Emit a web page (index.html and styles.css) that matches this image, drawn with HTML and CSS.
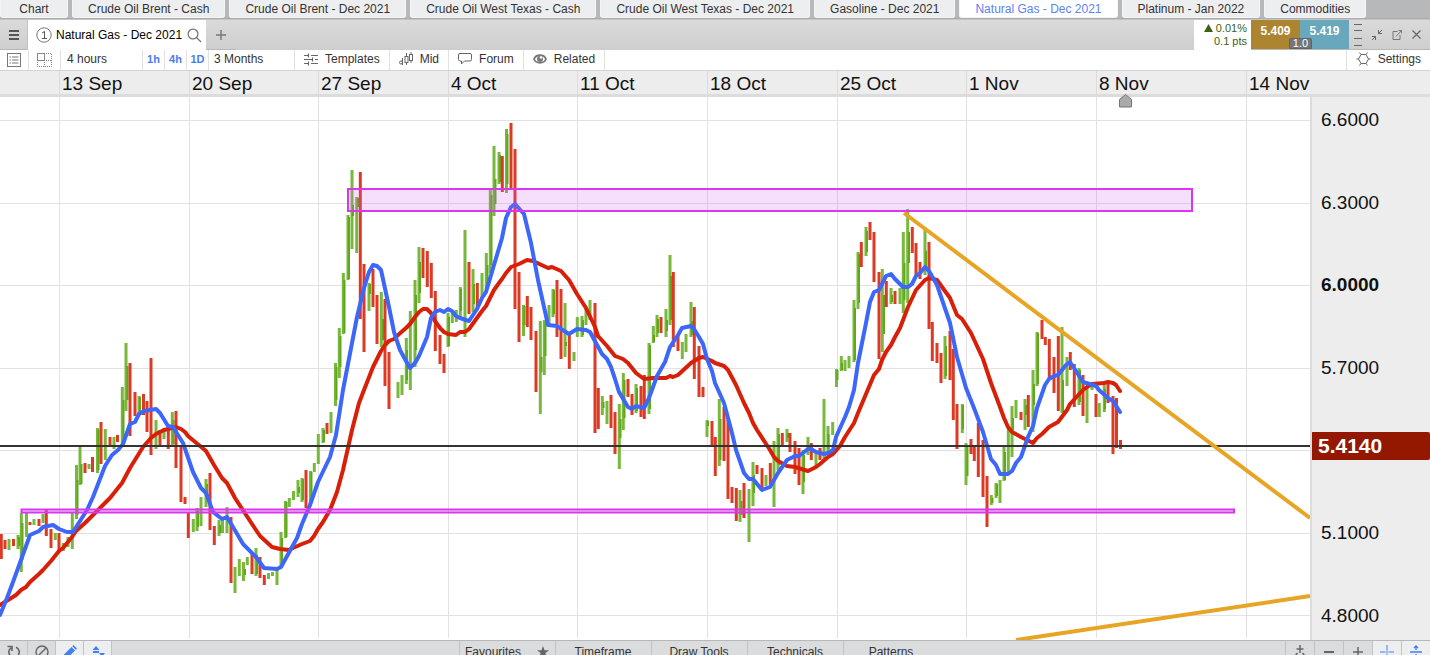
FILE: index.html
```html
<!DOCTYPE html>
<html lang="en">
<head>
<meta charset="utf-8">
<title>Natural Gas - Dec 2021</title>
<link rel="stylesheet" href="styles.css">
</head>
<body>
<nav class="markets" aria-label="Markets">
  <a href="#chart">Chart</a>
  <a href="#brent-cash">Crude Oil Brent - Cash</a>
  <a href="#brent-dec">Crude Oil Brent - Dec 2021</a>
  <a href="#wti-cash">Crude Oil West Texas - Cash</a>
  <a href="#wti-dec">Crude Oil West Texas - Dec 2021</a>
  <a href="#gasoline">Gasoline - Dec 2021</a>
  <a href="#natgas" class="current" aria-current="page">Natural Gas - Dec 2021</a>
  <a href="#platinum">Platinum - Jan 2022</a>
  <a href="#commodities">Commodities</a>
</nav>

<header class="titlebar">
  <button class="menu" aria-label="Menu"><svg width="10" height="10" stroke="#555" stroke-width="2"><path d="M0 1H10M0 5H10M0 9H10"/></svg></button>
  <div class="product">
    <svg width="16" height="16" fill="none" stroke="#777"><circle cx="8" cy="8" r="7.2"/><path d="M6 6L8.5 4.5V11.5M6 11.5H11" stroke="#555"/></svg>
    <span class="product-name">Natural Gas - Dec 2021</span>
    <button aria-label="Search"><svg width="15" height="15" fill="none" stroke="#777" stroke-width="1.3"><circle cx="6" cy="6" r="4.9"/><path d="M9.5 9.5L14 14"/></svg></button>
  </div>
  <button class="add" aria-label="Add chart"><svg width="10" height="10" stroke="#777" stroke-width="1.4"><path d="M5 0V10M0 5H10"/></svg></button>
  <div class="change"><span><svg width="9" height="8" fill="#3d6114"><path d="M4.500 0L9 8H0Z"/></svg> 0.01%</span><span>0.1 pts</span></div>
  <div class="deal">
    <button class="sell">5.409</button><button class="buy">5.419</button>
    <span class="spread">1.0</span>
  </div>
  <div class="window-tools">
    <button aria-label="Drag"><svg width="8" height="24" stroke="#666"><path d="M0 1.500H8M0 7.500H8M0 15.500H8M0 22.500H8"/></svg></button>
    <button aria-label="Shrink"><svg width="10" height="10" fill="none" stroke="#666"><path d="M10 0L6.500 3.500M6.500 0V3.500H10M0 10L3.500 6.500M0 6.500H3.500V10"/></svg></button>
    <button aria-label="Pop out"><svg width="10" height="10" fill="none" stroke="#777"><path d="M5.500 1.500H1V9.500H8V5M4 6.500L9 1M6.500 .5H9.500V3.500"/></svg></button>
    <button aria-label="Close"><svg width="9" height="9" stroke="#666" stroke-width="1.2"><path d="M.5 .5L8.500 8.500M8.500 .5L.5 8.500"/></svg></button>
  </div>
</header>

<div class="toolbar">
  <button class="tool list" aria-label="List"><svg width="14" height="14" fill="none" stroke="#777"><rect x=".5" y=".5" width="13" height="13"/><path d="M2.500 4H4M5 4H11.500M2.500 7H4M5 7H11.500M2.500 10H4M5 10H11.500"/></svg></button>
  <button class="tool layout" aria-label="Layout"><svg width="15" height="14" fill="none" stroke="#888"><rect x=".5" y=".5" width="7" height="7"/><path stroke-dasharray="1 1" d="M9 .5H14.500V13.500H.5V9M7.500 9V13.500M9 7.500H14.500"/></svg></button>
  <select class="interval" aria-label="Interval"><option>4 hours</option><option>1 day</option></select>
  <button class="quick">1h</button>
  <button class="quick">4h</button>
  <button class="quick">1D</button>
  <select class="range" aria-label="Range"><option>3 Months</option><option>1 Year</option></select>
  <button class="tool"><svg width="14" height="13" fill="none" stroke="#666" stroke-width="1.2"><path d="M0 2.500H4M7 2.500H14M0 6.500H8M11 6.500H14M0 10.500H4M7 10.500H14M4.500 .5V4.500M8.500 4.500V8.500M4.500 8.500V12.500"/></svg>Templates</button>
  <button class="tool mid"><svg width="14" height="14" fill="none" stroke="#666"><circle cx="2" cy="10.500" r="1.500"/><path d="M3.500 6V13M7.500 1V4M7.500 11V13M12 0V2M12 9V11"/><rect x="6" y="4.500" width="3" height="6"/><rect x="10.500" y="2.500" width="3" height="6"/></svg>Mid</button>
  <button class="tool"><svg width="14" height="12" fill="none" stroke="#666"><path d="M2 .5H12Q13.500 .5 13.500 2V6.500Q13.500 8 12 8H6.500L3.500 11V8H2Q.5 8 .5 6.500V2Q.5 .5 2 .5Z"/></svg>Forum</button>
  <button class="tool related"><svg width="14" height="10" fill="none" stroke="#777" stroke-width="1.800"><path d="M1 5C3 0 11 0 13 5C11 10 3 10 1 5Z"/><circle cx="7" cy="5" r="3" fill="#777" stroke="none"/><circle cx="8" cy="3.500" r="1.300" fill="#fff" stroke="none"/></svg>Related</button>
  <button class="tool settings"><svg width="15" height="14" fill="none" stroke="#666"><path d="M5 2.500H10L12.500 7L10 11.500H5L2.500 7Z"/><path d="M5 2.500L3.500 .5M10 2.500L11.500 .5M12.500 7H14.500M10 11.500L11.500 13.500M5 11.500L3.500 13.500M2.500 7H.5"/></svg>Settings</button>
</div>

<div class="dates">
  <span></span><span>13 Sep</span><span>20 Sep</span><span>27 Sep</span><span>4 Oct</span><span>11 Oct</span><span>18 Oct</span><span>25 Oct</span><span>1 Nov</span><span>8 Nov</span><span>14 Nov</span>
</div>

<main class="chart">
  <svg class="plot" viewBox="0 97 1310 543" preserveAspectRatio="none" role="img" aria-label="Natural Gas price chart">
    <path class="grid" d="M59.500 97V638M189.500 97V638M318.500 97V638M448.500 97V638M577.500 97V638M707.500 97V638M837.500 97V638M966.500 97V638M1096.500 97V638M1246.500 97V638M0 120.500H1310M0 203.500H1310M0 285.500H1310M0 368.500H1310M0 450.500H1310M0 533.500H1310M0 615.500H1310"/>
    <path class="up" d="M9 539V550M18 535V549M21.300 513V572M26.500 513V537M34 519V525M43 514V523M55.300 533V540M63.300 543V551M68 537V547M72.300 513V549M76.500 465V519M80 445V485M89 464V469M97.500 428V473M105.300 429V460M114 437V449M122.300 387V443M126 343V411M139 396V413M156 420V449M164 428V439M172.300 412V445M193.300 519V532M197 508V531M201 497V526M206 479V507M219 520V536M222.500 520V533M227 507V533M235 567V593M239.300 559V576M243.500 562V581M247.300 557V565M256 548V576M268.500 573V579M272.500 572V576M277 570V585M281 532V568M285.500 501V538M289.300 498V507M293.500 491V500M298 480V497M302 478V502M310.500 471V503M314.300 463V472M318.300 434V464M323 428V443M331 412V433M335.500 363V406M339.300 328V378M343.300 273V334M348 215V280M352 170V249M356.700 197V253M369 283V311M381.300 292V347M398 382V398M402 375V395M406.300 338V384M410.300 311V390M415 280V367M419 247V303M448 313V347M452.300 310V323M456.300 310V322M460.300 287V317M465 230V337M473 269V312M482 273V297M486.300 253V292M490.300 189V273M494 146V216M499 152V184M506.500 129V193M523.500 305V336M540.300 321V414M544.300 320V375M549 305V325M553 289V317M565 303V357M574 352V361M577.300 317V337M582 316V337M586 309V325M590 300V320M602.300 396V415M607 401V424M619.300 404V469M623.300 373V430M636 384V413M649 343V414M653.300 326V343M657 315V337M666 309V337M670 255V325M682.300 342V359M686 334V352M691 302V337M707 420V437M719.300 399V466M740 490V522M749 489V542M753 462V506M766 475V486M774 441V507M778 428V470M787 429V442M803 450V494M808 437V455M816 452V466M824 399V460M828 426V453M832.700 422V435M836.500 369V387M841.300 356V371M845 360V371M849 356V368M854 300V362M858 252V309M866 227V256M882.300 269V352M891 288V304M900 288V304M903.300 232V313M907.700 209V303M925 230V275M945 336V379M962.300 404V433M966 443V485M991.300 495V505M996 483V498M1000 480V503M1004 447V481M1008.300 427V475M1012 406V457M1016 400V418M1025 399V430M1033 370V432M1037 332V386M1062 327V413M1067 357V386M1079 368V405M1087 387V423M1092 386V390M1099.300 403V417M1104.300 385V412"/>
    <path class="body" d="M19 537V546M22.500 523V560M77.500 480V515M81.500 464V484M98.500 430V470M123.500 400V440M127.500 366V400M140 397V411M173.500 420V444M198 511V527M207 484V500M220 525V533M245 569V575M257 555V574M282 538V564M286.500 502V537M299 487V493M303 479V500M311.500 472V500M324 430V442M336.500 367V400M340.500 336V367M344.500 280V333M349 217V279M353 205V216M358 198V207M370 284V294M383 319V340M407 350V380M416 295V350M420 262V293M449 317V346M461 289V311M474 284V304M487.500 265V286M491.500 195V265M495.500 179V204M500 155V182M507.500 134V184M524.500 306V325M541.500 357V372M545.500 322V356M554 290V314M566 342V346M583 320V335M603.500 402V408M620.500 419V438M624.500 380V418M637 388V411M650 345V409M654 335V342M658 319V333M667 320V331M671 276V320M692 321V335M708 421V426M720.500 419V460M741.500 501V515M754 475V493M779 434V465M788 433V438M804 455V482M828.500 434V449M837.500 370V380M842 363V370M855 308V360M859 254V303M867 231V252M884 295V334M892 295V302M904.500 263V300M909 232V263M926 251V270M946 346V376M963 405V429M967.500 447V476M992.500 498V503M997 484V496M1005 452V480M1013 418V430M1026 405V415M1034 384V405M1038 333V384M1063 380V412M1080 370V402M1105 389V409"/>
    <path class="down" d="M1.300 534V559M5 540V549M13.500 539V546M30 522V525M39 519V526M46.300 510V536M51 529V548M59 533V550M85 463V473M92.500 457V472M101 422V464M110 437V446M117.500 435V442M130 363V436M135 392V416M143.500 394V415M147 401V432M151 358V455M160 430V445M168.300 428V449M176 411V468M181 447V502M185 497V504M188.300 513V538M210 473V530M214.300 526V545M231 517V583M252 553V574M260 557V578M264.300 575V585M306 470V508M327 423V434M360.300 172V319M364 264V352M373 269V307M377 295V344M385 299V386M389 352V409M423 248V278M427.300 251V287M431.300 263V298M435.300 291V351M440 335V364M444 354V373M469 262V314M477.300 283V310M502.300 156V192M511 123V189M515 149V309M519 272V342M527.300 296V327M531 307V340M536 331V392M557 280V337M561 289V359M569.300 335V369M595 303V433M598.300 388V429M611 395V428M615 412V454M628 379V397M632 394V415M641 386V417M644.300 375V419M661 317V333M673.300 272V347M678 335V351M694.300 307V379M699 346V397M703 387V397M712 421V445M715.300 437V476M724 407V461M728 420V499M732 487V503M736.300 488V521M744 483V518M757 465V474M762 468V488M770.300 463V486M782.300 433V445M790 433V452M795 441V474M799 448V485M811.300 443V460M820 448V460M861.300 242V267M870 222V240M874 232V282M879 272V359M886.300 281V307M895 291V304M912.300 227V253M916 243V275M920 262V279M929 242V329M932.300 322V361M937 343V363M941 353V383M950 331V380M953.300 349V420M957 404V449M971 439V454M974.300 446V461M978.300 423V477M983 440V497M987 476V527M1021 412V420M1028.300 395V427M1042 320V339M1045.300 337V345M1049.300 339V380M1054 357V393M1058.300 336V411M1070.300 352V370M1074.300 364V407M1083 375V416M1096 394V417M1108 382V403M1113 396V454M1116.500 398V448M1120.500 440V449"/>
    <path class="slow" d="M0 605L16 595 21 590 26 587 30 582 39 574 43 570 51 561 59 551 63 548 72 537 76 531 85 523 101 507 110 498 122 483 130 468 143 447 151 438 156 434 164 430 176 427 181 429 185 432 188 436 206 451 214 465 222 478 227 483 235 498 252 524 260 536 272 547 280 549 289 550 293 548 302 544 310 541 314 536 318 529 323 522 330 510 337 492 343 470 352 430 359 403 364 390 373 367 381 351 385 345 389 341 394 339 398 335 406 328 410 324 415 317 419 312 423 309 427 309 431 313 435 321 440 328 444 332 448 334 456 335 460 332 465 332 469 329 482 311 486 306 494 290 499 283 502 279 506 273 511 267 519 264 527 260 533 261 548 268 552 267 561 271 569 280 577 294 586 308 595 327 598 336 607 346 615 356 623 359 628 363 636 373 644 379 653 378 666 378 670 376 673 377 678 375 691 363 699 358 703 357 712 361 715 363 724 366 728 370 736 385 744 403 749 413 753 423 757 430 770 450 774 457 778 461 787 466 795 467 808 471 816 467 820 464 828 457 833 454 840 446 845 437 854 423 858 413 874 375 879 369 882 360 886 352 891 345 895 337 900 328 908 307 916 290 925 280 929 278 937 280 950 298 957 315 962 319 971 333 983 359 991 383 1000 407 1004 418 1008 427 1012 432 1021 437 1033 443 1037 438 1042 434 1049 427 1058 422 1067 410 1070 404 1083 390 1087 387 1092 384 1104 383 1108 382 1113 383 1116 385 1120 391"/>
    <path class="fast" d="M0 615L7 598 13 582 21 560 30 535 39 531 43 527 53 525 59 529 67 532 73 532 80 521 87 510 93 497 105 466 112 455 118 450 123 444 130 424 135 422 139 414 144 411 156 409 160 413 168 426 173 427 183 443 193 472 201 488 206 493 213 512 222 519 227 517 233 527 243 544 256 557 264 568 277 569 281 567 297 538 302 524 310 505 318 482 330 457 336 435 343 390 352 343 357 317 364 288 369 272 373 265 377 266 381 270 389 307 394 332 400 350 406 361 410 368 415 363 419 356 427 337 431 318 435 312 440 310 444 312 448 309 452 311 456 316 460 318 469 321 477 309 482 298 486 292 494 265 502 238 506 218 511 207 515 204 524 214 531 243 538 280 548 325 557 326 561 329 569 334 577 329 586 330 590 332 602 354 607 359 611 367 615 379 619 392 628 407 632 409 636 406 644 408 649 398 657 376 665 362 670 347 678 335 682 328 691 326 694 329 699 337 703 344 707 359 712 371 715 383 724 403 732 433 736 450 744 473 749 479 753 479 762 490 770 487 778 473 787 460 795 456 799 456 808 449 811 449 816 452 824 454 828 453 833 450 836 437 845 417 849 407 854 390 858 363 866 323 870 302 874 292 879 290 886 276 891 274 895 279 903 287 908 287 912 284 916 276 920 273 925 267 929 271 937 285 950 323 957 357 966 388 974 408 983 432 991 459 996 465 1000 474 1008 474 1012 471 1016 463 1021 457 1028 437 1033 426 1037 408 1045 385 1049 379 1054 376 1058 375 1066 365 1070 362 1074 368 1083 382 1096 386 1099 390 1108 398 1113 401 1120 412"/>
    <rect class="zone" x="348" y="189" width="844" height="22"/>
    <rect class="zone" x="21.500" y="509.500" width="1212.500" height="3"/>
    <path class="price" d="M0 446H1310"/>
    <path class="trend" d="M904 213L1310 518M1016 640L1310 596"/>
    <path class="pin" d="M1119.500 107V99.500L1125.500 94.500L1131.500 99.500V107Z"/>
  </svg>
  <aside class="axis">
    <div class="prices"><span>6.6000</span><span>6.3000</span><b>6.0000</b><span>5.7000</span><span></span><span>5.1000</span><span>4.8000</span></div>
    <strong class="last">5.4140</strong>
  </aside>
</main>

<footer class="bottom">
  <div class="group">
    <button aria-label="Reset"><svg width="14" height="14" fill="none" stroke="#666" stroke-width="1.600"><path d="M9 2.200A5.200 5.200 0 1 1 4 2.800M.5 1.500H5V6"/></svg></button>
    <button aria-label="Clear"><svg width="14" height="14" fill="none" stroke="#666" stroke-width="1.400"><circle cx="7" cy="7" r="6"/><path d="M3 11L11 3"/></svg></button>
    <button class="on" aria-label="Draw"><svg width="14" height="14" fill="#4080f5"><path d="M0 14L1 9.500L8.500 2L12 5.500L4.500 13ZM9.300 1.200L10.500 0L14 3.500L12.800 4.700Z"/></svg></button>
    <button class="on" aria-label="Shapes"><svg width="14" height="14" fill="#4080f5"><path d="M5 1L8.500 5H1.500ZM2 6H8V8H2ZM8 8H14L11 12Z"/></svg></button>
  </div>
  <div class="group menus">
    <button class="fav">Favourites<svg width="12" height="12" fill="#666"><path d="M6 0L7.500 4.300H12L8.400 7L9.700 11.500L6 8.800L2.300 11.500L3.600 7L0 4.300H4.500Z"/></svg></button>
    <button>Timeframe</button><button>Draw Tools</button><button>Technicals</button><button>Patterns</button>
  </div>
  <div class="group">
    <button aria-label="Fit"><svg width="14" height="14" fill="none" stroke="#666" stroke-width="1.500"><path d="M7 0V8M3.500 4H10.500M4.500 8L2 11M9.500 8L12 11M1 12H13"/></svg></button>
    <button aria-label="Zoom out"><svg width="10" height="10" stroke="#666" stroke-width="2"><path d="M0 5H10"/></svg></button>
    <button aria-label="Zoom in"><svg width="10" height="10" stroke="#666" stroke-width="1.500"><path d="M0 5H10M5 0V10"/></svg></button>
    <button class="on" aria-label="Crosshair"><svg width="14" height="14" stroke="#4080f5"><path d="M0 7H5.500M8.500 7H14M7 0V5.500M7 8.500V14M6 7H8"/></svg></button>
    <button class="on" aria-label="Level"><svg width="12" height="14" fill="none" stroke="#4080f5" stroke-width="1.400"><path d="M0 7H12M6 1V5M6 9V13M4 3L6 1L8 3M4 11L6 13L8 11"/></svg></button>
  </div>
</footer>
</body>
</html>
```
FILE: styles.css
```css
* { box-sizing: border-box; }

body {
  margin: 0;
  height: 100vh;
  overflow: hidden;
  display: flex;
  flex-direction: column;
  background: #fff;
  color: #333;
  font: 12px/16px "Liberation Sans", Arial, sans-serif;
}

button, select {
  margin: 0;
  padding: 0;
  border: 0;
  border-radius: 0;
  background: none;
  color: inherit;
  font: inherit;
  white-space: nowrap;
}
select { appearance: none; }
svg { flex: none; }

/* market tabs */
.markets {
  flex: none;
  display: flex;
  gap: 4px;
  height: 19px;
  background: #b7b8ba;
  border-bottom: 1px solid #a9abad;
}
.markets a {
  min-width: 68px;
  height: 18px;
  padding: 0 15px;
  background: #edeef0;
  border: 1px solid #f5f5f6;
  border-top: 0;
  border-radius: 0 0 3px 3px;
  color: #333;
  line-height: 18px;
  text-align: center;
  text-decoration: none;
  white-space: nowrap;
}
.markets .current { background: #fff; color: #5c82f2; }

/* product title bar */
.titlebar {
  flex: none;
  display: flex;
  height: 31px;
  background: linear-gradient(#dadada, #cecece);
  border-top: 1px solid #c6c6c6;
}
.titlebar > :not(.product):not(.change) { border-bottom: 1px solid #b8b8b8; }
.titlebar button { display: flex; align-items: center; justify-content: center; }
.menu { width: 28px; border-right: 1px solid #c2c2c2; }
.product {
  display: flex;
  align-items: center;
  gap: 4px;
  padding: 0 4px 0 8px;
  background: #fff;
  color: #000;
}
.product button { width: 16px; }
.add { width: 30px; }
.change {
  margin-left: auto;
  display: flex;
  flex-direction: column;
  width: 57px;
  padding: 2px 4px 0 0;
  background: #fff;
  color: #3d6114;
  font-size: 11px;
  line-height: 13px;
  text-align: right;
  white-space: nowrap;
}
.deal { position: relative; display: flex; color: #fff; font-weight: bold; }
.titlebar .deal button { width: 49px; padding-bottom: 8px; }
.sell { background: #ad8430; }
.buy { background: #69a7bc; }
.spread {
  position: absolute;
  left: 50%;
  bottom: 0;
  width: 23px;
  margin-left: -11px;
  background: #747678;
  border: 1px solid #606264;
  border-radius: 2px 2px 0 0;
  font: 11px/9px "Liberation Sans", Arial, sans-serif;
  text-align: center;
}
.window-tools { display: flex; align-items: center; gap: 10px; padding: 0 9px 0 5px; }

/* chart toolbar */
.toolbar {
  flex: none;
  display: flex;
  height: 21px;
  border-bottom: 1px solid #d3d3d3;
}
.toolbar > * { padding-bottom: 2px; border-right: 1px solid #e2e2e2; }
.tool { display: flex; align-items: center; gap: 7px; padding: 0 9px 2px; }
.toolbar .list { width: 29px; padding: 0 7px; }
.toolbar .layout { width: 32px; padding: 0 8px; }
.interval { width: 82px; padding-left: 6px; }
.quick { width: 22px; color: #4b7cf3; font-size: 11px; font-weight: bold; }
.range { width: 86px; padding-left: 5px; }
.settings { margin-left: auto; border-left: 1px solid #e2e2e2; }
.toolbar .settings { border-right: 0; }

/* date strip */
.dates {
  flex: none;
  display: grid;
  grid-template-columns: 60fr 130fr 129fr 130fr 129fr 130fr 130fr 129fr 130fr 150fr 63fr 120px;
  height: 26px;
  background: #ededed;
  border-bottom: 3px solid #dcdcdc;
  color: #111;
  font-size: 19px;
  line-height: 26px;
}
.dates span {
  min-width: 0;
  height: 23px;
  padding-left: 2px;
  border-right: 1px solid #dcdcdc;
  white-space: nowrap;
}
.dates span:last-child { border-right: 0; }

/* plot */
.chart { flex: 1; min-height: 0; display: flex; }
.plot { flex: 1; min-width: 0; width: 0; height: 100%; overflow: visible; }
.plot path, .plot rect { fill: none; vector-effect: non-scaling-stroke; }
.plot .grid { stroke: #e2e2e2; }
.plot .up { stroke: #78b83c; stroke-width: 3; }
.plot .body { stroke: #5fa81c; stroke-width: 2; }
.plot .down { stroke: #dc3a24; stroke-width: 3; }
.plot .slow, .plot .fast { stroke-width: 4; stroke-linejoin: round; stroke-linecap: round; }
.plot .slow { stroke: #d82008; }
.plot .fast { stroke: #3d67fb; }
.plot .zone { fill: #d060f0; fill-opacity: .2; stroke: #d837ec; stroke-width: 2; }
.plot .price { stroke: #333; stroke-width: 2; }
.plot .trend { stroke: #e8a425; stroke-width: 4; }
.plot .pin { fill: #aaa; stroke: #777; }

.axis {
  position: relative;
  flex: 0 0 120px;
  display: flex;
  overflow: hidden;
  background: #ededed;
  border-left: 2px solid #dcdcdc;
}
.prices {
  display: grid;
  grid-auto-rows: 1fr;
  align-items: center;
  margin: -18px 0 -17px;
  padding-left: 9px;
  color: #111;
  font-size: 19px;
}
.last {
  position: absolute;
  top: calc(62% - 2px);
  left: -1px;
  right: 0;
  padding-left: 7px;
  background: #941700;
  border-radius: 2px;
  color: #fff;
  font-size: 21px;
  line-height: 28px;
}

/* bottom bar */
.bottom {
  position: relative;
  flex: none;
  display: flex;
  justify-content: space-between;
  height: 22px;
  margin-bottom: -7px;
  background: #dbdcde;
  border-top: 1px solid #b5b7b9;
}
.group { display: flex; }
.group button {
  display: flex;
  align-items: center;
  justify-content: center;
  width: 29px;
  border-left: 1px solid #c2c3c5;
}
.group:first-child button { border-left: 0; border-right: 1px solid #c2c3c5; width: 28px; }
.group .on { background: #edeef0; }
.group.menus button { width: 96px; }
.group.menus .fav { gap: 16px; }
```
